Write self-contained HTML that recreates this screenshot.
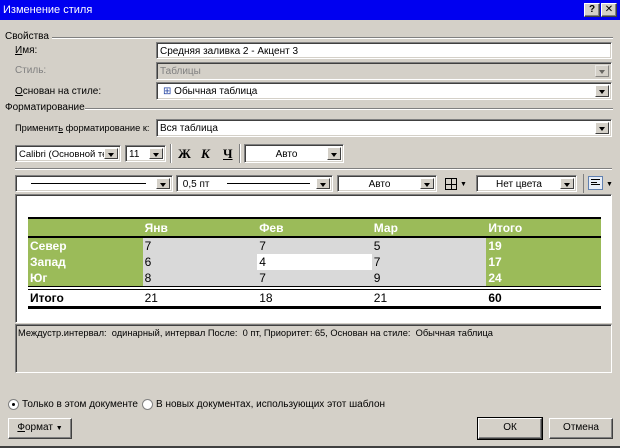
<!DOCTYPE html><html><head><meta charset="utf-8"><style>
*{margin:0;padding:0;box-sizing:border-box}
body{width:620px;height:448px;background:#d4d0c8;font-family:"Liberation Sans","DejaVu Sans",sans-serif;font-size:10px;color:#000;position:relative;overflow:hidden}
.a{position:absolute;white-space:nowrap}
.in{position:absolute;background:#fff;border:1px solid;border-color:#808080 #fff #fff #808080;box-shadow:inset 1px 1px 0 #404040,inset -1px -1px 0 #d4d0c8;padding:3px 3px 2px;line-height:12px;overflow:hidden}
.dd{position:absolute;right:2px;top:2px;bottom:2px;width:14px;background:#d4d0c8;border:1px solid;border-color:#fff #404040 #404040 #fff}
.dd:after{content:"";position:absolute;left:3px;top:50%;margin-top:-1px;border:3px solid transparent;border-top:4px solid #000;border-bottom:0}
.ln{position:absolute;height:2px;border-top:1px solid #808080;border-bottom:1px solid #fff}
.btn{position:absolute;background:#d4d0c8;border:1px solid;border-color:#fff #404040 #404040 #fff;box-shadow:inset -1px -1px 0 #808080;text-align:center;line-height:18px}
table{border-collapse:collapse;position:absolute;left:28px;top:217px;width:573px;font-size:12px}
td{height:16px;padding:0 2px;width:115px;line-height:16px}
.g{background:#9bbb59;color:#fff;font-weight:bold}
.s{background:#d9d9d9}
</style></head><body>
<div class="a" style="left:0;top:0;width:620px;height:20px;background:#0000f0;color:#fff;font-size:11px;padding:4px 3px">Изменение стиля</div>
<div class="btn" style="left:584px;top:3px;width:16px;height:14px;line-height:12px;font-weight:bold">?</div>
<div class="btn" style="left:601px;top:3px;width:16px;height:14px;line-height:12px;font-weight:bold">✕</div>
<div class="a" style="left:5px;top:31px">Свойства</div><div class="ln" style="left:52px;right:7px;top:37px"></div>
<div class="a" style="left:15px;top:45px"><u>И</u>мя:</div>
<div class="in" style="left:156px;top:42px;width:456px;height:17px">Средняя заливка 2 - Акцент 3</div>
<div class="a" style="left:15px;top:65px;color:#808080">Стиль:</div>
<div class="in" style="left:156px;top:62px;width:456px;height:18px;background:#d4d0c8;color:#808080">Таблицы<div class="dd" style="opacity:.5"></div></div>
<div class="a" style="left:15px;top:86px"><u>О</u>снован на стиле:</div>
<div class="in" style="left:156px;top:82px;width:456px;height:18px;padding-left:6px"><span style="color:#2040a0">⊞</span> Обычная таблица<div class="dd"></div></div>
<div class="a" style="left:5px;top:102px">Форматирование</div><div class="ln" style="left:85px;right:7px;top:108px"></div>
<div class="a" style="left:15px;top:123px;font-size:9.3px">Применит<u>ь</u> форматирование к:</div>
<div class="in" style="left:156px;top:119px;width:456px;height:18px">Вся таблица<div class="dd"></div></div>
<div class="in" style="left:15px;top:145px;width:106px;height:17px;font-size:9.5px">Calibri (Основной тек<div class="dd"></div></div>
<div class="in" style="left:125px;top:145px;width:41px;height:17px">11<div class="dd"></div></div>
<div class="a" style="left:170px;top:144px;width:2px;height:19px;border-left:1px solid #808080;border-right:1px solid #fff"></div>
<div class="a" style="left:178px;top:146px;font-weight:bold;font-family:'Liberation Serif',serif;font-size:13px">Ж</div>
<div class="a" style="left:201px;top:146px;font-weight:bold;font-style:italic;font-family:'Liberation Serif',serif;font-size:13px">К</div>
<div class="a" style="left:223px;top:146px;font-weight:bold;text-decoration:underline;font-family:'Liberation Serif',serif;font-size:13px">Ч</div>
<div class="a" style="left:239px;top:144px;width:2px;height:19px;border-left:1px solid #808080;border-right:1px solid #fff"></div>
<div class="in" style="left:244px;top:144px;width:100px;height:19px;text-align:center;padding-right:18px;padding-top:4px">Авто<div class="dd"></div></div>
<div class="ln" style="left:15px;right:8px;top:168px"></div>
<div class="in" style="left:15px;top:175px;width:158px;height:17px"><div class="a" style="left:15px;top:7px;width:115px;border-top:1px solid #000"></div><div class="dd"></div></div>
<div class="in" style="left:176px;top:175px;width:157px;height:17px">&nbsp;0,5 пт<div class="a" style="left:50px;top:7px;width:83px;border-top:1px solid #000"></div><div class="dd"></div></div>
<div class="in" style="left:337px;top:175px;width:100px;height:17px;text-align:center;padding-right:18px">Авто<div class="dd"></div></div>
<div class="a" style="left:445px;top:178px;width:12px;height:12px;border:1px solid #000;background:linear-gradient(#000,#000) center/1px 100% no-repeat,linear-gradient(#000,#000) center/100% 1px no-repeat"></div>
<div class="a" style="left:460px;top:181px;font-size:7px">▼</div>
<div class="in" style="left:476px;top:175px;width:101px;height:17px;text-align:center;padding-right:18px">Нет цвета<div class="dd"></div></div>
<div class="a" style="left:583px;top:174px;width:1px;height:19px;border-left:1px solid #808080"></div>
<div class="a" style="left:588px;top:176px;width:15px;height:14px;border:1px solid #6080b0;background:#e8eef8"><div class="a" style="left:2px;top:2px;width:9px;border-top:1px solid #000;height:6px;border-bottom:1px solid #000"></div><div class="a" style="left:2px;top:5px;width:6px;border-top:1px solid #000"></div></div>
<div class="a" style="left:606px;top:181px;font-size:7px">▼</div>
<div class="a" style="left:15px;top:194px;width:597px;height:129px;background:#fff;border:1px solid;border-color:#808080 #fff #fff #808080;box-shadow:inset 1px 1px 0 #404040"></div>
<table>
<tr><td colspan="5" style="height:2px;padding:0;background:#000"></td></tr>
<tr class="g"><td style="height:17px"></td><td>Янв</td><td>Фев</td><td>Мар</td><td>Итого</td></tr>
<tr><td colspan="5" style="height:2px;padding:0;background:#000"></td></tr>
<tr><td class="g">Север</td><td class="s">7</td><td class="s">7</td><td class="s">5</td><td class="g">19</td></tr>
<tr><td class="g">Запад</td><td class="s">6</td><td>4</td><td class="s">7</td><td class="g">17</td></tr>
<tr><td class="g">Юг</td><td class="s">8</td><td class="s">7</td><td class="s">9</td><td class="g">24</td></tr>
<tr><td colspan="5" style="height:3px;padding:0;border-top:1px solid #000;border-bottom:1px solid #000"></td></tr>
<tr style="background:#fff"><td style="font-weight:bold">Итого</td><td>21</td><td>18</td><td>21</td><td style="font-weight:bold">60</td></tr>
<tr><td colspan="5" style="height:3px;padding:0;background:#000"></td></tr>
</table>
<div class="a" style="left:15px;top:324px;width:597px;height:49px;border:1px solid;border-color:#808080 #fff #fff #808080;box-shadow:inset 1px 1px 0 #404040;padding:3px 2px;font-size:9.3px">Междустр.интервал:&nbsp; одинарный, интервал После:&nbsp; 0 пт, Приоритет: 65, Основан на стиле:&nbsp; Обычная таблица</div>
<div class="a" style="left:8px;top:399px;width:11px;height:11px;border-radius:50%;background:#fff;border:1px solid #808080"><div class="a" style="left:3px;top:3px;width:3px;height:3px;border-radius:50%;background:#000"></div></div>
<div class="a" style="left:22px;top:399px">Только в этом документе</div>
<div class="a" style="left:142px;top:399px;width:11px;height:11px;border-radius:50%;background:#fff;border:1px solid #808080"></div>
<div class="a" style="left:156px;top:399px">В новых документах, использующих этот шаблон</div>
<div class="btn" style="left:8px;top:418px;width:64px;height:21px"><u>Ф</u>ормат <span style="font-size:7px">▼</span></div>
<div class="btn" style="left:478px;top:418px;width:64px;height:21px;outline:1px solid #000">ОК</div>
<div class="btn" style="left:549px;top:418px;width:64px;height:21px">Отмена</div>
<div class="a" style="left:0;top:446px;width:620px;height:2px;background:#404040"></div>
</body></html>
